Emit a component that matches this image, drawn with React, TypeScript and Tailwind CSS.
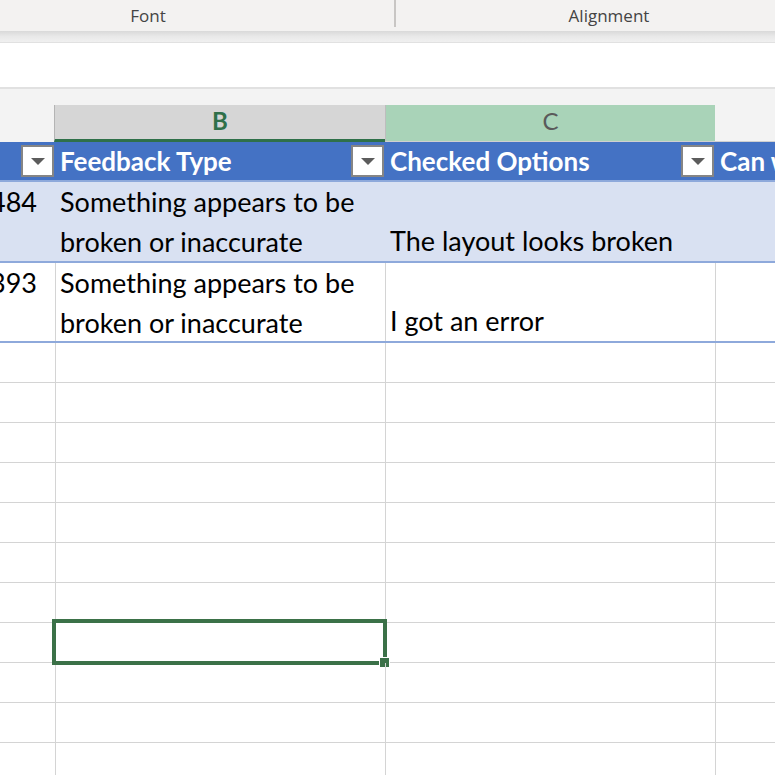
const cellFont = "font-['Lato','Noto_Sans',sans-serif]";

const FilterButton = () => (
  <div className="w-[33px] h-[32px] shrink-0 bg-white border-2 border-[#858585] flex items-center justify-center">
    <svg width="14" height="7" viewBox="0 0 14 7">
      <path d="M0 0H14L7 7Z" fill="#5c5c5c" />
    </svg>
  </div>
);

const SelectedCell = () => (
  <div className="absolute -top-[4px] -left-[4px] -right-[2px] -bottom-[3px] border-[4px] border-[#3b7148]">
    <div className="absolute -right-[7px] -bottom-[7px] w-[11px] h-[11px] bg-[#3b7148] border border-white" />
  </div>
);

const rows = [
  { num: '1484', banded: true, checked: 'The layout looks broken' },
  { num: '1393', banded: false, checked: 'I got an error' },
];

const App = () => {
  return (
    <div className={`w-[775px] h-[775px] overflow-hidden bg-white ${cellFont}`}>
      {/* ribbon group labels */}
      <div className="flex h-[31px] bg-[#f3f2f1] text-[17px] text-[#444] font-['Open_Sans',sans-serif]">
        <div className="w-[492px] -ml-[98px] shrink-0 flex items-center justify-center">Font</div>
        <div className="w-[2px] h-[27px] shrink-0 bg-[#c8c6c4]" />
        <div className="w-[426px] shrink-0 flex items-center justify-center">Alignment</div>
      </div>
      <div className="h-[11px] bg-gradient-to-b from-[#d9d9d9] via-[#e9e9e9] to-[#f0f0f0]" />
      <div className="h-[1px] bg-[#e1e1e1]" />
      {/* formula bar */}
      <div className="h-[44px] bg-white" />
      <div className="h-[2px] bg-[#e1e1e1]" />
      <div className="h-[16px] bg-[#f3f3f3]" />

      {/* column letters */}
      <div className="flex h-[37px] bg-[#f3f3f3] text-[24px] leading-none">
        <div className="w-[54px] shrink-0" />
        <div className="w-[331px] shrink-0 bg-[#d6d6d6] border-l border-[#b4b4b4] border-b-[3px] border-b-[#2f7049] flex items-center justify-center pb-[3px] font-bold text-[#2f7049]">
          B
        </div>
        <div className="w-[330px] shrink-0 bg-[#a9d3b8] border-l border-[#bdbdbd] border-b border-b-[#d0d0d0] flex items-center justify-center pb-[4px] text-[#5a5a5a]">
          C
        </div>
        <div className="flex-1 border-b border-[#d0d0d0]" />
      </div>

      {/* table header */}
      <div className="flex h-[40px] bg-[#4472c4] border-b-2 border-[#8ea9db] text-[26px] font-bold text-white leading-none">
        <div className="w-[56px] shrink-0 flex items-center justify-end pr-[2px]">
          <FilterButton />
        </div>
        <div className="w-[330px] shrink-0 flex items-center pl-[4px] pr-[2px]">
          <span className="flex-1 whitespace-nowrap">Feedback Type</span>
          <FilterButton />
        </div>
        <div className="w-[330px] shrink-0 flex items-center pl-[4px] pr-[2px]">
          <span className="flex-1 whitespace-nowrap">Checked Options</span>
          <FilterButton />
        </div>
        <div className="flex-1 flex items-center pl-[4px] overflow-hidden">
          <span className="whitespace-nowrap">Can we contact you?</span>
        </div>
      </div>

      {/* table rows */}
      {rows.map((r, i) => (
        <div
          key={r.num}
          className={`flex ${i === 0 ? 'h-[81px]' : 'h-[80px]'} border-b-2 border-[#8ea9db] text-[27px] leading-[40px] text-black ${r.banded ? 'bg-[#d9e1f2]' : 'bg-white'}`}
        >
          <div className={`w-[56px] shrink-0 overflow-hidden flex justify-end pr-[18px] border-r ${r.banded ? 'border-transparent' : 'border-[#d4d4d4]'}`}>
            <span className="whitespace-nowrap">{r.num}</span>
          </div>
          <div className={`w-[330px] shrink-0 pl-[4px] border-r ${r.banded ? 'border-transparent' : 'border-[#d4d4d4]'}`}>
            <div className="whitespace-nowrap">Something appears to be</div>
            <div className="whitespace-nowrap">broken or inaccurate</div>
          </div>
          <div className={`w-[330px] shrink-0 pl-[4px] flex items-end border-r ${r.banded ? 'border-transparent' : 'border-[#d4d4d4]'}`}>
            <span className="whitespace-nowrap">{r.checked}</span>
          </div>
          <div className="flex-1" />
        </div>
      ))}

      {/* empty grid */}
      {Array.from({ length: 11 }).map((_, i) => (
        <div key={i} className="flex h-[40px] border-b border-[#d4d4d4]">
          <div className="w-[56px] shrink-0 border-r border-[#d4d4d4]" />
          <div className="w-[330px] shrink-0 border-r border-[#d4d4d4] relative">
            {i === 7 && <SelectedCell />}
          </div>
          <div className="w-[330px] shrink-0 border-r border-[#d4d4d4]" />
          <div className="flex-1" />
        </div>
      ))}
    </div>
  );
};

export default App;
